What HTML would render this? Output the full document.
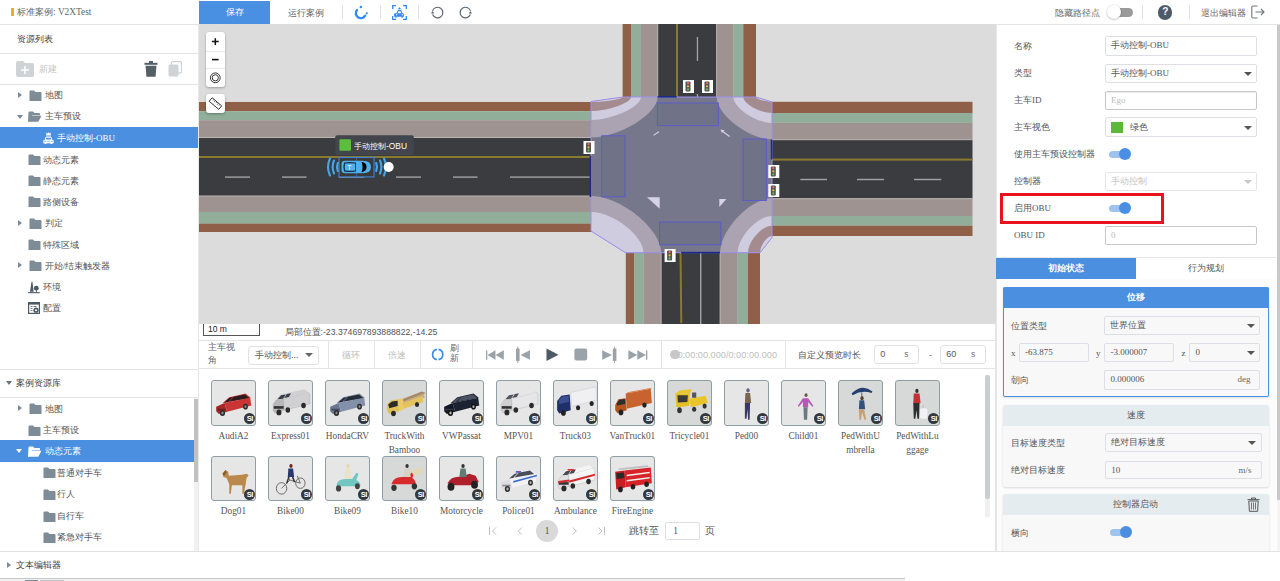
<!DOCTYPE html>
<html><head><meta charset="utf-8">
<style>
*{box-sizing:border-box;margin:0;padding:0}
html,body{width:1280px;height:581px;overflow:hidden;background:#fff}
body{position:relative;font-family:"Liberation Serif",serif;font-size:9px;color:#555}
.a{position:absolute}
.sans{font-family:"Liberation Sans",sans-serif}
.hl{position:absolute;height:1px;background:#e4e4e4}
.vl{position:absolute;width:1px;background:#e4e4e4}
/* left tree */
.ti{position:absolute;left:0;width:198px;height:21px;line-height:21px;color:#555;white-space:nowrap}
.ti .tx{position:absolute;top:0}
.fold{position:absolute;width:13px;height:10px;background:#7c8b96;border-radius:1px}
.fold:before{content:"";position:absolute;left:0;top:-2px;width:6px;height:3px;background:#7c8b96;border-radius:1px 1px 0 0}
.tri{position:absolute;width:0;height:0;border-left:4px solid #7c8b96;border-top:3.5px solid transparent;border-bottom:3.5px solid transparent}
.trid{position:absolute;width:0;height:0;border-top:4px solid #7c8b96;border-left:3.5px solid transparent;border-right:3.5px solid transparent}
/* right panel */
.lab{position:absolute;left:1014px;color:#555;line-height:12px}
.inp{position:absolute;background:#fff;border:1px solid #dcdfe6;border-radius:2px;color:#555;line-height:17px;padding-left:5px}
.caret{position:absolute;width:0;height:0;border-top:4px solid #555;border-left:4px solid transparent;border-right:4px solid transparent}
.tog{position:absolute;width:22px;height:12px}
.tog:before{content:"";position:absolute;left:0;top:2.5px;width:18px;height:7px;border-radius:4px;background:#9ec3ef}
.tog:after{content:"";position:absolute;right:0;top:0;width:12px;height:12px;border-radius:50%;background:#4a8fe2}
/* assets */
.it{position:absolute;width:57px;height:75px}
.it .bx{position:absolute;left:0;top:0;width:45px;height:45px;border:1.5px solid #8e9fa8;border-radius:3px;background:#e8e8e8;overflow:hidden}
.it .bd{position:absolute;right:1px;bottom:1px;width:10px;height:10px;border-radius:50%;background:#3a3f44;color:#fff;font:bold 6px/10px "Liberation Sans",sans-serif;text-align:center}
.it .nm{position:absolute;left:-6px;top:50px;width:57px;text-align:center;line-height:14px;color:#555;font-size:9.5px;word-break:break-all}
</style></head><body>

<!-- ===== TOP BAR ===== -->
<div class="a" style="left:0;top:0;width:1280px;height:24px;background:#fff"></div>
<div class="a" style="left:11.2px;top:7.9px;width:3px;height:8px;background:#f9a825"></div>
<div class="a" style="left:17px;top:5px;line-height:14px;color:#666;font-size:9.3px">标准案例: V2XTest</div>
<div class="a" style="left:199px;top:1px;width:71px;height:23px;background:#4a90e2;color:#fff;text-align:center;line-height:23px">保存</div>
<div class="a" style="left:287.7px;top:5.5px;line-height:14px;color:#666">运行案例</div>
<div class="a" style="left:342px;top:5px;width:1px;height:14px;background:#e0e0e0"></div>
<svg class="a" style="left:354px;top:5px" width="15" height="15" viewBox="0 0 15 15"><path d="M2.97,4.9 A5,5 0 1 0 11.13,10.61" fill="none" stroke="#2f8af5" stroke-width="2.3" stroke-linecap="round"/><circle cx="6.8" cy="2.0" r="1.2" fill="#2f8af5"/><circle cx="12.8" cy="8.3" r="1.1" fill="#2f8af5"/></svg>
<div class="a" style="left:380px;top:5px;width:1px;height:14px;background:#e0e0e0"></div>
<svg class="a" style="left:392px;top:5px" width="15" height="15" viewBox="0 0 15 15"><path d="M0.7,4 V0.7 H4 M11,0.7 H14.3 V4 M14.3,11 V14.3 H11 M4,14.3 H0.7 V11" fill="none" stroke="#2f8af5" stroke-width="1.3"/><path d="M7.5,1.8 l0.5,1.1 1.1,0.1 -0.8,0.7 0.3,1.1 -1.1,-0.6 -1.1,0.6 0.3,-1.1 -0.8,-0.7 1.1,-0.1z" fill="#2f8af5"/><path d="M4.6,8.2 l0.9,-2.6 q0.2,-0.5 0.8,-0.5 h2.4 q0.6,0 0.8,0.5 l0.9,2.6 h0.6 q0.9,0 0.9,0.9 v2.7 h-1.2 v0.9 h-1.3 v-0.9 h-4.8 v0.9 h-1.3 v-0.9 h-1.2 v-2.7 q0,-0.9 0.9,-0.9z" fill="#2f8af5"/><path d="M5.6,8.2 l0.7,-2 h2.4 l0.7,2z" fill="#fff"/><rect x="4" y="9.3" width="1.3" height="1" fill="#fff"/><rect x="9.7" y="9.3" width="1.3" height="1" fill="#fff"/></svg>
<div class="a" style="left:418px;top:5px;width:1px;height:14px;background:#e0e0e0"></div>
<svg class="a" style="left:430px;top:5px" width="15" height="15" viewBox="0 0 15 15"><path d="M2.52,5.9 A5.3,5.3 0 1 1 2.6,9.5" fill="none" stroke="#5b6770" stroke-width="1.2"/><path d="M0.9,8.6 h3.4 l-1.7,-2.6z" fill="#5b6770"/></svg>
<svg class="a" style="left:458px;top:5px" width="15" height="15" viewBox="0 0 15 15"><path d="M12.48,5.9 A5.3,5.3 0 1 0 12.4,9.5" fill="none" stroke="#5b6770" stroke-width="1.2"/><path d="M14.1,8.6 h-3.4 l1.7,-2.6z" fill="#5b6770"/></svg>
<!-- right -->
<div class="a" style="left:1054.5px;top:5.5px;line-height:14px;color:#666">隐藏路径点</div>
<div class="a" style="left:1107.5px;top:7.5px;width:25.7px;height:9.5px;border-radius:5px;background:#9a9a9a"></div>
<div class="a" style="left:1107px;top:5px;width:14px;height:14px;border-radius:50%;background:#fff;box-shadow:0 0.5px 2px rgba(0,0,0,0.35)"></div>
<div class="a" style="left:1142px;top:5px;width:1px;height:14px;background:#e0e0e0"></div>
<div class="a" style="left:1158px;top:5.2px;width:14.4px;height:14.4px;border-radius:50%;background:#4c5b66;color:#fff;text-align:center;font:bold 10px/14.4px 'Liberation Sans',sans-serif">?</div>
<div class="a" style="left:1188.5px;top:5px;width:1px;height:14px;background:#e0e0e0"></div>
<div class="a" style="left:1201.3px;top:5.5px;line-height:14px;color:#666">退出编辑器</div>
<svg class="a" style="left:1251px;top:5px" width="14" height="14" viewBox="0 0 14 14"><path d="M6.5,1 H2 q-1.2,0 -1.2,1.2 v9.6 q0,1.2 1.2,1.2 h4.5" fill="none" stroke="#6b7780" stroke-width="1.1"/><path d="M4.5,7 h8.5 M10,4 l3,3 -3,3" fill="none" stroke="#6b7780" stroke-width="1.1"/></svg>

<!-- ===== LEFT PANEL CONTENT ===== -->
<svg width="0" height="0" style="position:absolute">
<defs>
<symbol id="fd" viewBox="0 0 13 11"><path d="M0.5,1.5 q0,-1 1,-1 h3.5 l1.5,1.5 h5 q1,0 1,1 v7.5 q0,1 -1,1 h-10 q-1,0 -1,-1z" fill="currentColor"/></symbol>
<symbol id="fo" viewBox="0 0 14 11"><path d="M0.5,1.5 q0,-1 1,-1 h3.5 l1.5,1.5 h4.5 q1,0 1,1 v1.2 h-8 l-3,6.8 h-0.5 q-0.5,0 -0.5,-1z M3.5,4.8 h10 l-3.2,6 h-9.5z" fill="currentColor"/></symbol>
</defs></svg>
<div class="a" style="left:0;top:24px;width:199px;height:527px;background:#fff"></div>
<div class="hl" style="left:0;top:24px;width:199px"></div>
<div class="a" style="left:16.5px;top:32px;line-height:14px;color:#444">资源列表</div>
<div class="hl" style="left:0;top:53px;width:198px"></div>
<!-- new / trash / copy -->
<svg class="a" style="left:16px;top:61px" width="18" height="16" viewBox="0 0 18 16"><path d="M0,2 q0,-2 2,-2 h5 l2,2 h7 q2,0 2,2 v10 q0,2 -2,2 h-14 q-2,0 -2,-2z" fill="#cfd3d6"/><path d="M9,5 v8 M5,9 h8" stroke="#fff" stroke-width="1.6"/></svg>
<div class="a" style="left:38.5px;top:62px;line-height:14px;color:#c2c2c2">新建</div>
<svg class="a" style="left:144px;top:61px" width="14" height="16" viewBox="0 0 14 16"><rect x="0.5" y="1.8" width="13" height="2" fill="#555f66"/><rect x="5" y="0" width="4" height="2" fill="#555f66"/><path d="M1.6,4.8 h10.8 l-0.8,11 h-9.2z" fill="#555f66"/></svg>
<svg class="a" style="left:168px;top:61px" width="14" height="16" viewBox="0 0 14 16"><rect x="3.5" y="0.5" width="10" height="11.5" rx="1.5" fill="#fff" stroke="#cfd3d6" stroke-width="1.3"/><rect x="0.5" y="3.5" width="10" height="12" rx="1.5" fill="#cfd3d6"/></svg>
<div class="hl" style="left:0;top:84px;width:198px"></div>

<div class="tri" style="left:18px;top:91.5px"></div>
<svg class="a" style="left:28.5px;top:89.5px;color:#7d8c96" width="13" height="11"><use href="#fd"/></svg>
<div class="a" style="left:44.5px;top:88px;line-height:14px">地图</div>

<div class="trid" style="left:17px;top:114.5px"></div>
<svg class="a" style="left:27.5px;top:111px;color:#7d8c96" width="14" height="11"><use href="#fo"/></svg>
<div class="a" style="left:44.5px;top:109px;line-height:14px">主车预设</div>

<div class="a" style="left:0;top:127.2px;width:198px;height:21.1px;background:#4a8fe0"></div>
<svg class="a" style="left:42.5px;top:132px" width="11" height="12" viewBox="0 0 11 12"><path d="M3.4,3 l-0.3,-2.4 1.3,1 1.1,-1.4 1.1,1.4 1.3,-1 -0.3,2.4z" fill="#fff"/><rect x="3" y="3.5" width="5" height="1" fill="#fff"/><path d="M2.6,5 h5.8 l1,3 h0.6 q0.7,0 0.7,0.8 v2.4 h-1.4 v0.8 h-1.8 v-0.8 h-4 v0.8 h-1.8 v-0.8 h-1.4 v-2.4 q0,-0.8 0.7,-0.8 h0.6z" fill="#fff"/><path d="M3.3,5.8 h4.4 l0.6,1.6 h-5.6z" fill="#4a8fe0"/><rect x="1.5" y="8.8" width="1.2" height="1" fill="#4a8fe0"/><rect x="8.3" y="8.8" width="1.2" height="1" fill="#4a8fe0"/><rect x="3.8" y="8.8" width="3.4" height="1" fill="#4a8fe0" opacity="0.6"/></svg>
<div class="a" style="left:57px;top:131px;line-height:14px;color:#fff">手动控制-OBU</div>

<svg class="a" style="left:27.5px;top:154px;color:#7d8c96" width="13" height="11"><use href="#fd"/></svg>
<div class="a" style="left:42.5px;top:152.5px;line-height:14px">动态元素</div>
<svg class="a" style="left:27.5px;top:175.2px;color:#7d8c96" width="13" height="11"><use href="#fd"/></svg>
<div class="a" style="left:42.5px;top:173.8px;line-height:14px">静态元素</div>
<svg class="a" style="left:27.5px;top:196.4px;color:#7d8c96" width="13" height="11"><use href="#fd"/></svg>
<div class="a" style="left:42.5px;top:195px;line-height:14px">路侧设备</div>
<div class="tri" style="left:18px;top:219.8px"></div>
<svg class="a" style="left:28.8px;top:217.7px;color:#7d8c96" width="13" height="11"><use href="#fd"/></svg>
<div class="a" style="left:44.8px;top:216.3px;line-height:14px">判定</div>
<svg class="a" style="left:27.5px;top:239px;color:#7d8c96" width="13" height="11"><use href="#fd"/></svg>
<div class="a" style="left:42.5px;top:237.6px;line-height:14px">特殊区域</div>
<div class="tri" style="left:18px;top:262.3px"></div>
<svg class="a" style="left:28.8px;top:260.2px;color:#7d8c96" width="13" height="11"><use href="#fd"/></svg>
<div class="a" style="left:44.8px;top:258.8px;line-height:14px">开始/结束触发器</div>
<svg class="a" style="left:28px;top:281px" width="12" height="13" viewBox="0 0 12 13"><path d="M4,0.6 q-0.6,0 -1.2,5 l-0.8,5.2 h3.6 l-0.6,-5.2 q-0.4,-5 -1,-5z" fill="#4d5a63"/><circle cx="8.3" cy="7.2" r="2.4" fill="#4d5a63"/><rect x="7.9" y="8" width="0.9" height="3" fill="#4d5a63"/><rect x="0.1" y="11.1" width="11.7" height="1.1" fill="#4d5a63"/></svg>
<div class="a" style="left:42.5px;top:280px;line-height:14px">环境</div>
<svg class="a" style="left:28px;top:302px" width="12" height="12" viewBox="0 0 12 12"><rect x="0.6" y="0.6" width="10.8" height="10.8" fill="none" stroke="#4d5a63" stroke-width="1.2"/><rect x="0.6" y="0.6" width="10.8" height="2" fill="#4d5a63"/><path d="M2.5,4.5 h2 M2.5,6.5 h2 M2.5,8.5 h2 M5.5,4.5 h3" stroke="#4d5a63" stroke-width="0.8"/><circle cx="8" cy="8.2" r="2.6" fill="#4d5a63"/><circle cx="8" cy="8.2" r="1" fill="#fff"/></svg>
<div class="a" style="left:42.5px;top:301.3px;line-height:14px">配置</div>

<!-- lower section -->
<div class="hl" style="left:0;top:368.5px;width:199px"></div>
<div class="trid" style="left:6px;top:381px;border-top-color:#66737c"></div>
<div class="a" style="left:16.2px;top:376px;line-height:14px;color:#444">案例资源库</div>
<div class="hl" style="left:0;top:397px;width:199px"></div>
<div class="tri" style="left:18px;top:405px"></div>
<svg class="a" style="left:28.8px;top:403px;color:#7d8c96" width="13" height="11"><use href="#fd"/></svg>
<div class="a" style="left:45px;top:401.5px;line-height:14px">地图</div>
<svg class="a" style="left:27.9px;top:424.5px;color:#7d8c96" width="13" height="11"><use href="#fd"/></svg>
<div class="a" style="left:42.7px;top:423px;line-height:14px">主车预设</div>
<div class="a" style="left:0;top:440.4px;width:194px;height:21.2px;background:#4a8fe0"></div>
<div class="trid" style="left:16px;top:449px;border-top-color:#fff"></div>
<svg class="a" style="left:27.9px;top:445.5px;color:#fff" width="14" height="11"><use href="#fo"/></svg>
<div class="a" style="left:45px;top:444px;line-height:14px;color:#fff">动态元素</div>
<svg class="a" style="left:42.7px;top:467.3px;color:#7d8c96" width="13" height="11"><use href="#fd"/></svg>
<div class="a" style="left:57px;top:465.8px;line-height:14px">普通对手车</div>
<svg class="a" style="left:42.7px;top:488.9px;color:#7d8c96" width="13" height="11"><use href="#fd"/></svg>
<div class="a" style="left:57px;top:487.4px;line-height:14px">行人</div>
<svg class="a" style="left:42.7px;top:510.5px;color:#7d8c96" width="13" height="11"><use href="#fd"/></svg>
<div class="a" style="left:57px;top:509px;line-height:14px">自行车</div>
<svg class="a" style="left:42.7px;top:531.5px;color:#7d8c96" width="13" height="11"><use href="#fd"/></svg>
<div class="a" style="left:57px;top:530px;line-height:14px">紧急对手车</div>
<div class="a" style="left:194.2px;top:397.5px;width:4px;height:153.5px;background:#f1f1f1"></div>
<div class="a" style="left:194.2px;top:398.7px;width:3.6px;height:83px;background:#c1c1c1"></div>
<div class="a" style="left:198px;top:24px;width:1px;height:527px;background:#e8e8e8"></div>

<!-- ===== MAP ===== -->
<div class="a" style="left:199px;top:24px;width:797px;height:300px;background:#dcdcdc;overflow:hidden" id="map"><svg class="a" style="left:0;top:0" width="797" height="300" viewBox="199 24 797 300">
<defs>
<clipPath id="jc"><polygon points="591,101.5 623,97 756,97 772,102 772,237.5 760,252.7 625.5,252.7 591,231"/></clipPath>
<g id="tl"><rect x="-5" y="-4" width="11" height="13" fill="#fff"/><rect x="-2.5" y="-2.5" width="5" height="10" rx="1" fill="#555"/><circle cx="0" cy="-0.8" r="1.1" fill="#e66"/><circle cx="0" cy="2.3" r="1.1" fill="#eb3"/><circle cx="0" cy="5.4" r="1.1" fill="#6b5"/></g>
</defs>
<rect x="199" y="24" width="797" height="300" fill="#dcdcdc"/>
<!-- left road -->
<rect x="199" y="102" width="393" height="9.2" fill="#905f47"/>
<rect x="199" y="111.2" width="393" height="9" fill="#90ae99"/>
<rect x="199" y="120.2" width="393" height="17.3" fill="#9e9390"/>
<rect x="199" y="137.5" width="393" height="58.5" fill="#3b3c40"/>
<rect x="199" y="196" width="393" height="16" fill="#9e9390"/>
<rect x="199" y="212" width="393" height="11.6" fill="#90ae99"/>
<rect x="199" y="223.6" width="393" height="8.4" fill="#905f47"/>
<rect x="199" y="137" width="393" height="1" fill="#b9b5b4"/>
<rect x="199" y="195.5" width="393" height="1" fill="#b9b5b4"/>
<rect x="199" y="156" width="393" height="2" fill="#8a7a2e"/>
<g fill="#a3a3a3"><rect x="225" y="176.4" width="25" height="1.4"/><rect x="282" y="176.4" width="24.5" height="1.4"/><rect x="339" y="176.4" width="25" height="1.4"/><rect x="396" y="176.4" width="25" height="1.4"/><rect x="453" y="176.4" width="24.5" height="1.4"/><rect x="510" y="176.4" width="80" height="1.4"/></g>
<!-- right road -->
<rect x="771" y="101.8" width="201.5" height="11.2" fill="#905f47"/>
<rect x="771" y="113" width="201.5" height="9.9" fill="#90ae99"/>
<rect x="771" y="122.9" width="201.5" height="16.8" fill="#9e9390"/>
<rect x="771" y="139.7" width="201.5" height="59" fill="#3b3c40"/>
<rect x="771" y="198.7" width="201.5" height="17.3" fill="#9e9390"/>
<rect x="771" y="216" width="201.5" height="9.7" fill="#90ae99"/>
<rect x="771" y="225.7" width="201.5" height="10.3" fill="#905f47"/>
<rect x="771" y="139.2" width="201.5" height="1" fill="#b9b5b4"/>
<rect x="771" y="198.2" width="201.5" height="1" fill="#b9b5b4"/>
<rect x="771" y="158.6" width="201.5" height="2" fill="#8a7a2e"/>
<g fill="#a3a3a3"><rect x="800.4" y="178.8" width="26.6" height="1.4"/><rect x="857" y="178.8" width="27" height="1.4"/><rect x="914" y="178.8" width="27.3" height="1.4"/></g>
<!-- top road -->
<rect x="622.6" y="24" width="8.4" height="74" fill="#905f47"/>
<rect x="631" y="24" width="10" height="74" fill="#90ae99"/>
<rect x="641" y="24" width="16.6" height="74" fill="#9e9390"/>
<rect x="657.6" y="24" width="59.1" height="74" fill="#3b3c40"/>
<rect x="716.7" y="24" width="16.7" height="74" fill="#9e9390"/>
<rect x="733.4" y="24" width="9.9" height="74" fill="#90ae99"/>
<rect x="743.3" y="24" width="12.7" height="74" fill="#905f47"/>
<rect x="657.2" y="24" width="1" height="74" fill="#b9b5b4"/>
<rect x="716.2" y="24" width="1" height="74" fill="#b9b5b4"/>
<rect x="676" y="24" width="2" height="74" fill="#8a7a2e"/>
<rect x="696.8" y="37" width="1.3" height="24" fill="#a3a3a3"/><rect x="696.8" y="94" width="1.3" height="3.5" fill="#a3a3a3"/>
<!-- bottom road -->
<rect x="625.8" y="252" width="8.6" height="72" fill="#905f47"/>
<rect x="634.4" y="252" width="9" height="72" fill="#90ae99"/>
<rect x="643.4" y="252" width="17.7" height="72" fill="#9e9390"/>
<rect x="661.1" y="252" width="59" height="72" fill="#3b3c40"/>
<rect x="720.1" y="252" width="17.6" height="72" fill="#9e9390"/>
<rect x="737.7" y="252" width="10.3" height="72" fill="#90ae99"/>
<rect x="748" y="252" width="12" height="72" fill="#905f47"/>
<rect x="660.6" y="252" width="1" height="72" fill="#b9b5b4"/>
<rect x="719.6" y="252" width="1" height="72" fill="#b9b5b4"/>
<polygon points="679.5,252 681.5,252 682.3,323 680.3,323" fill="#8a7a2e"/>
<rect x="700" y="252" width="1.4" height="72" fill="#a3a3a3"/>
<!-- junction -->
<g clip-path="url(#jc)">
<rect x="585" y="90" width="195" height="170" fill="#76778a"/>
<path d="M591,97 L657.6,97.0 C657.6,114.0 619.0,137.5 591.0,137.5 Z" fill="#aba3b2"/>
<path d="M591,97 L641.0,97.0 C641.0,106.7 612.0,120.0 591.0,120.0 Z" fill="#cfccdf"/>
<path d="M591,97 L631.0,97.0 C631.0,102.9 607.8,111.0 591.0,111.0 Z" fill="#a48b8f"/>
<path d="M591,97 L622.6,97.0 C622.6,99.1 604.3,102.0 591.0,102.0 Z" fill="#d1cfe0"/>
<path d="M772,97 L716.7,97.0 C716.7,114.8 748.8,139.4 772.0,139.4 Z" fill="#aba3b2"/>
<path d="M772,97 L733.4,97.0 C733.4,107.9 755.8,122.9 772.0,122.9 Z" fill="#cfccdf"/>
<path d="M772,97 L743.3,97.0 C743.3,103.7 759.9,113.0 772.0,113.0 Z" fill="#a48b8f"/>
<path d="M772,97 L756.0,97.0 C756.0,99.0 765.3,101.8 772.0,101.8 Z" fill="#d1cfe0"/>
<path d="M591,252.7 L661.1,252.7 C661.1,228.9 620.4,196.0 591.0,196.0 Z" fill="#aba3b2"/>
<path d="M591,252.7 L643.4,252.7 C643.4,235.6 613.0,212.0 591.0,212.0 Z" fill="#cfccdf"/>
<path d="M772,252.7 L720.1,252.7 C720.1,229.8 750.2,198.2 772.0,198.2 Z" fill="#aba3b2"/>
<path d="M772,252.7 L737.7,252.7 C737.7,237.3 757.6,216.0 772.0,216.0 Z" fill="#cfccdf"/>
<path d="M772,252.7 L748.0,252.7 C748.0,241.4 761.9,225.7 772.0,225.7 Z" fill="#a48b8f"/>
<path d="M772,252.7 L760.0,252.7 C760.0,245.7 767.0,236.0 772.0,236.0 Z" fill="#d1cfe0"/>
<g fill="#707288" stroke="#5a5ad0" stroke-width="0.9">
<rect x="657.4" y="103" width="61" height="22.6"/>
<rect x="601.7" y="135.8" width="23.3" height="61"/>
<rect x="743" y="139" width="23.4" height="61.5"/>
<rect x="659.6" y="222" width="61.3" height="22.8"/>
</g>
<g fill="#d4d4e6"><polygon points="647,197.2 659.7,197.2 659.7,208.7"/><polygon points="719.3,199 726.4,199 719.3,207"/></g><g stroke="#d4d4e6" stroke-width="1.1"><line x1="653.6" y1="135.4" x2="658.8" y2="131.8"/><line x1="721.5" y1="130.5" x2="729.6" y2="136.5"/></g><polygon points="720.5,129.5 724.5,130.2 722,133" fill="#d4d4e6"/>
</g>
<polygon points="591,101.5 623,97 756,97 772,102 772,237.5 760,252.7 625.5,252.7 591,231" fill="none" stroke="#9d90f0" stroke-width="1"/>
<rect x="589.6" y="156" width="1.6" height="41" fill="#1c2a8a"/>
<rect x="770.8" y="139.5" width="1.6" height="20" fill="#1c2a8a"/>
<rect x="657.6" y="96" width="19" height="1.6" fill="#1c2a8a"/>
<rect x="681" y="251.8" width="39" height="1.6" fill="#1c2a8a"/>
<!-- traffic lights -->
<use href="#tl" x="688" y="84"/><use href="#tl" x="707" y="84"/>
<use href="#tl" x="588.5" y="145"/>
<use href="#tl" x="773.3" y="169"/><use href="#tl" x="773.3" y="188"/>
<use href="#tl" x="669.6" y="253"/>
<!-- car label -->
<rect x="335.2" y="135.2" width="78.6" height="19.9" rx="2" fill="#42454b"/>
<rect x="339.4" y="139.2" width="11.6" height="11.6" rx="1" fill="#5cbf3c"/>
<text x="354" y="148.6" font-family="Liberation Sans, sans-serif" font-size="8.4" fill="#fff">手动控制-OBU</text>
<!-- car -->
<rect x="339" y="157.5" width="35" height="19.4" fill="#3b3838" stroke="#3f7fd0" stroke-width="1.2"/>
<rect x="356" y="157.5" width="0.6" height="19.4" fill="#3f7fd0"/>
<path d="M345,160.8 h18 q8,0 8,6.2 q0,6.2 -8,6.2 h-18 q-3.5,0 -3.5,-3 v-6.4 q0,-3 3.5,-3z" fill="#4fb0ea"/>
<path d="M361.5,161.8 q5,1 5,5.2 q0,4.2 -5,5.2 q2.2,-5.2 0,-10.4z" fill="#000"/>
<path d="M344,162.6 q6,-1 12,0 v8.8 q-6,1 -12,0 q-1.2,-4.4 0,-8.8z" fill="#14304a"/>
<path d="M345.2,163.6 q5,-0.8 10,0 v6.8 q-5,0.8 -10,0 q-1,-3.4 0,-6.8z" fill="#4fb0ea"/>
<text x="347.5" y="170.2" font-family="Liberation Sans, sans-serif" font-size="6.5" fill="#fff">T</text>
<g fill="none" stroke="#44a8e8" stroke-width="2.1" stroke-linecap="round">
<path d="M337.8,163 q-1.6,4 0,8"/><path d="M334,160.5 q-2.8,6.5 0,13"/><path d="M330,158.5 q-4,8.5 0,17"/>
<path d="M376.2,163 q1.6,4 0,8"/><path d="M380,160.5 q2.8,6.5 0,13"/><path d="M384,158.5 q4,8.5 0,17"/>
</g>
<circle cx="388.7" cy="167" r="5" fill="#fff"/>
</svg>
</div>


<div class="a" style="left:206.3px;top:32px;width:18.6px;height:55px;background:#fff;border-radius:3px;box-shadow:0 1px 2.5px rgba(0,0,0,0.3)"></div>
<div class="a" style="left:206.3px;top:50.5px;width:18.6px;height:1px;background:#e8e8e8"></div>
<div class="a" style="left:206.3px;top:68.4px;width:18.6px;height:1px;background:#e8e8e8"></div>
<svg class="a" style="left:206.3px;top:32px" width="19" height="55" viewBox="0 0 19 55"><path d="M9.3,6.2 v6.8 M5.9,9.6 h6.8" stroke="#111" stroke-width="1.5"/><path d="M6,27.6 h6.6" stroke="#111" stroke-width="1.6"/><circle cx="9.3" cy="45.8" r="4.9" fill="none" stroke="#222" stroke-width="0.9"/><circle cx="9.3" cy="45.8" r="3.1" fill="none" stroke="#222" stroke-width="0.9"/></svg>
<div class="a" style="left:206.3px;top:94.4px;width:18.6px;height:18.7px;background:#fff;border-radius:3px;box-shadow:0 1px 2.5px rgba(0,0,0,0.3)"></div>
<svg class="a" style="left:206.3px;top:94.4px" width="19" height="19" viewBox="0 0 19 19"><g transform="rotate(40 9.5 9.5)"><rect x="3.2" y="7.3" width="12.6" height="4.6" fill="none" stroke="#333" stroke-width="0.9"/><path d="M5.5,7.3 v1.6 M7.5,7.3 v2.2 M9.5,7.3 v1.6 M11.5,7.3 v2.2 M13.5,7.3 v1.6" stroke="#333" stroke-width="0.6"/></g></svg>
<!-- ===== SCALE / CONTROL BAR ===== -->
<div class="a" style="left:199px;top:324px;width:797px;height:227px;background:#fff"></div>
<div class="a" style="left:203px;top:324px;width:56.5px;height:12px;border:1.5px solid #555;border-top:none"></div>
<div class="a sans" style="left:208px;top:324px;line-height:11px;font-size:8.5px;color:#222">10 m</div>
<div class="a sans" style="left:284.5px;top:325.5px;line-height:13px;font-size:8.7px;color:#555">局部位置:-23.374697893888822,-14.25</div>
<div class="hl" style="left:199px;top:340px;width:797px"></div>
<div class="hl" style="left:199px;top:368px;width:797px"></div>
<div class="a sans" style="left:208px;top:341px;width:36px;line-height:13.3px;font-size:9px;color:#666">主车视<br>角</div>
<div class="a sans" style="left:248px;top:345.5px;width:70.8px;height:19.2px;border:1px solid #e2e2e2;border-radius:3px;line-height:17px;padding-left:6px;color:#555;font-size:9px">手动控制...</div>
<div class="caret" style="left:305px;top:353.3px;border-top-color:#666"></div>
<div class="vl" style="left:327.5px;top:341px;height:27px"></div>
<div class="a sans" style="left:341.5px;top:347.5px;line-height:14px;color:#bbb;font-size:9px">循环</div>
<div class="vl" style="left:374.4px;top:341px;height:27px"></div>
<div class="a sans" style="left:387.5px;top:347.5px;line-height:14px;color:#bbb;font-size:9px">倍速</div>
<div class="vl" style="left:420.3px;top:341px;height:27px"></div>
<svg class="a" style="left:431px;top:348px" width="13" height="13" viewBox="0 0 13 13"><path d="M5.9,1.3 A5.3,5.3 0 0 0 5.9,11.7" fill="none" stroke="#3c8ee8" stroke-width="1.7"/><path d="M7.5,1.3 A5.3,5.3 0 0 1 7.5,11.7" fill="none" stroke="#3c8ee8" stroke-width="1.7"/></svg>
<div class="a sans" style="left:450px;top:342.5px;width:12px;line-height:10.5px;color:#666;font-size:9px">刷<br>新</div>
<div class="vl" style="left:472.4px;top:341px;height:27px"></div>
<svg class="a" style="left:485px;top:346px" width="165" height="18" viewBox="485 346 165 18">
<g fill="#9aa3aa">
<rect x="486" y="350.3" width="1.3" height="9.4"/><polygon points="487.5,355 495.5,350.3 495.5,359.7"/><polygon points="495.5,355 503.8,350.3 503.8,359.7"/>
<rect x="516" y="348.6" width="3.6" height="12.3"/><rect x="517.3" y="346.6" width="1" height="16.3"/><polygon points="520.5,355 530,350.3 530,359.7"/>
<rect x="574.4" y="348.4" width="12.8" height="12.2" rx="2"/>
<polygon points="612,355 602.2,350.3 602.2,359.7"/><rect x="612.8" y="348.6" width="3.6" height="12.3"/><rect x="614.1" y="346.6" width="1" height="16.3"/>
<polygon points="637.3,355 628.4,350.3 628.4,359.7"/><polygon points="646,355 637.3,350.3 637.3,359.7"/><rect x="646" y="350.3" width="1.3" height="9.4"/>
</g>
<polygon points="546.5,348.4 558.5,354.7 546.5,361" fill="#4d5a63"/>
</svg>
<div class="vl" style="left:660.5px;top:341px;height:27px"></div>
<div class="a" style="left:670px;top:349.5px;width:9.5px;height:9.5px;border-radius:50%;background:#c8c8c8"></div>
<div class="a sans" style="left:676px;top:347.5px;line-height:14px;color:#c0c0c0;font-size:9.2px;width:101px;overflow:hidden;white-space:nowrap;direction:rtl">0:00:00.000/0:00:00.000</div>
<div class="vl" style="left:785.4px;top:341px;height:27px"></div>
<div class="a sans" style="left:797.5px;top:347.5px;line-height:14px;color:#555;font-size:9px">自定义预览时长</div>
<div class="a sans" style="left:874.3px;top:344.6px;width:45.2px;height:19.1px;border:1px solid #e2e2e2;border-radius:3px;line-height:17px;padding-left:5px;color:#555;font-size:9px">0<span style="position:absolute;right:10px;color:#777;font-size:8.5px">s</span></div>
<div class="a sans" style="left:929px;top:347.5px;line-height:14px;color:#666;font-size:9px">-</div>
<div class="a sans" style="left:940.2px;top:344.6px;width:46px;height:19.1px;border:1px solid #e2e2e2;border-radius:3px;line-height:17px;padding-left:5px;color:#555;font-size:9px">60<span style="position:absolute;right:10px;color:#777;font-size:8.5px">s</span></div>
<div class="vl" style="left:995px;top:323px;height:228px"></div>

<!-- ===== ASSETS ===== -->
<div class="a" style="left:210.7px;top:380.2px;width:45.5px;height:45.5px;border:1.6px solid #8d9ea7;border-radius:3px;background:#e6e6e6;overflow:hidden"><svg width="45" height="45" viewBox="1 1 43 43" style="position:absolute;left:0;top:0"><polygon points="5,25.5 13,22 15.5,30.5 7.5,32.5 5,30" fill="#a82626"/>
<polygon points="13,22 37.5,17 38.5,24.5 15.5,30.5" fill="#c93434"/>
<polygon points="11,22.3 17.5,16.5 33,13 38,17 13,22" fill="#c93434"/>
<polygon points="12.5,21.6 17.8,17 21,16.3 16.5,21" fill="#2a1c1c"/>
<polygon points="17.8,20.6 21.8,16 32.5,13.8 36.5,17.2" fill="#2a1c1c"/>
<rect x="6" y="27.5" width="8" height="1.6" fill="#2a1c1c" opacity="0.55"/>
<ellipse cx="11" cy="31.5" rx="2.5" ry="2.9" fill="#2a2a2a"/><ellipse cx="11" cy="31.5" rx="1.1" ry="1.4" fill="#888"/>
<ellipse cx="33" cy="25.5" rx="2.3" ry="2.7" fill="#2a2a2a"/><ellipse cx="33" cy="25.5" rx="1" ry="1.3" fill="#888"/></svg></div>
<div class="a" style="left:244.3px;top:413.2px;width:11px;height:11px;border-radius:50%;background:#32383d;color:#fff;text-align:center;font:bold 7.5px/11px 'Liberation Sans',sans-serif;letter-spacing:-0.5px">SI</div>
<div class="a" style="left:202.7px;top:428.7px;width:61.5px;text-align:center;line-height:14px;color:#555;font-size:9.3px">AudiA2</div>
<div class="a" style="left:267.7px;top:380.2px;width:45.5px;height:45.5px;border:1.6px solid #8d9ea7;border-radius:3px;background:#e6e6e6;overflow:hidden"><svg width="45" height="45" viewBox="1 1 43 43" style="position:absolute;left:0;top:0"><polygon points="5,23 8,19 15,18 15.5,29 6.5,31.5 5,29.5" fill="#b8b8ba" stroke="#a8a8ac" stroke-width="0.35"/>
<polygon points="15,18 38,11.5 40,13 40,23 15.5,29" fill="#d0d0d2" stroke="#a8a8ac" stroke-width="0.35"/>
<polygon points="8,19 12,14 35,9 38,11.5 15,18" fill="#d0d0d2"/>
<polygon points="9,18.5 12.5,14.5 17,13.8 14.5,18" fill="#3a3e46"/>
<polygon points="15.5,17.2 18,13.5 22,12.7 20,16.3" fill="#3a3e46"/>
<rect x="5.5" y="25" width="9.5" height="2.5" fill="#333"/>
<ellipse cx="10.5" cy="31" rx="2.4" ry="2.8" fill="#2a2a2a"/><ellipse cx="34" cy="24.5" rx="2.2" ry="2.6" fill="#2a2a2a"/><ellipse cx="19" cy="28.8" rx="2.2" ry="2.6" fill="#2a2a2a"/></svg></div>
<div class="a" style="left:301.3px;top:413.2px;width:11px;height:11px;border-radius:50%;background:#32383d;color:#fff;text-align:center;font:bold 7.5px/11px 'Liberation Sans',sans-serif;letter-spacing:-0.5px">SI</div>
<div class="a" style="left:259.7px;top:428.7px;width:61.5px;text-align:center;line-height:14px;color:#555;font-size:9.3px">Express01</div>
<div class="a" style="left:324.7px;top:380.2px;width:45.5px;height:45.5px;border:1.6px solid #8d9ea7;border-radius:3px;background:#e6e6e6;overflow:hidden"><svg width="45" height="45" viewBox="1 1 43 43" style="position:absolute;left:0;top:0"><polygon points="5,25.5 13,22 15.5,30.5 7.5,32.5 5,30" fill="#6b7690"/>
<polygon points="13,22 37.5,17 38.5,24.5 15.5,30.5" fill="#8390aa"/>
<polygon points="11,22.3 17.5,16.5 33,13 38,17 13,22" fill="#8390aa"/>
<polygon points="12.5,21.6 17.8,17 21,16.3 16.5,21" fill="#262c38"/>
<polygon points="17.8,20.6 21.8,16 32.5,13.8 36.5,17.2" fill="#262c38"/>
<rect x="6" y="27.5" width="8" height="1.6" fill="#262c38" opacity="0.55"/>
<ellipse cx="11" cy="31.5" rx="2.5" ry="2.9" fill="#2a2a2a"/><ellipse cx="11" cy="31.5" rx="1.1" ry="1.4" fill="#888"/>
<ellipse cx="33" cy="25.5" rx="2.3" ry="2.7" fill="#2a2a2a"/><ellipse cx="33" cy="25.5" rx="1" ry="1.3" fill="#888"/></svg></div>
<div class="a" style="left:358.3px;top:413.2px;width:11px;height:11px;border-radius:50%;background:#32383d;color:#fff;text-align:center;font:bold 7.5px/11px 'Liberation Sans',sans-serif;letter-spacing:-0.5px">SI</div>
<div class="a" style="left:316.7px;top:428.7px;width:61.5px;text-align:center;line-height:14px;color:#555;font-size:9.3px">HondaCRV</div>
<div class="a" style="left:381.7px;top:380.2px;width:45.5px;height:45.5px;border:1.6px solid #8d9ea7;border-radius:3px;background:#d7d9d9;overflow:hidden"><svg width="45" height="45" viewBox="1 1 43 43" style="position:absolute;left:0;top:0"><polygon points="18,19 38,11 42,12.5 22,21" fill="#a58a66"/><polygon points="19,21 40,13 41,17 20,25" fill="#c9ad82"/>
<polygon points="5,23 9,19.5 16,18.5 16.5,30 7,32.5 5,30" fill="#e2c05a"/><polygon points="6,23.5 9.5,20.5 15,19.8 15,25 7,27" fill="#2a2a2a"/>
<polygon points="16,18.5 20,17.5 21,28 16.5,30" fill="#eccb66"/><polygon points="20,22 39,15.5 39.5,21 21,27.5" fill="#e5c35c"/>
<ellipse cx="11" cy="32" rx="2.3" ry="2.6" fill="#2a2a2a"/><ellipse cx="33.5" cy="23.5" rx="2" ry="2.4" fill="#2a2a2a"/></svg></div>
<div class="a" style="left:415.3px;top:413.2px;width:11px;height:11px;border-radius:50%;background:#32383d;color:#fff;text-align:center;font:bold 7.5px/11px 'Liberation Sans',sans-serif;letter-spacing:-0.5px">SI</div>
<div class="a" style="left:373.7px;top:428.7px;width:61.5px;text-align:center;line-height:14px;color:#555;font-size:9.3px">TruckWith<br>Bamboo</div>
<div class="a" style="left:438.7px;top:380.2px;width:45.5px;height:45.5px;border:1.6px solid #8d9ea7;border-radius:3px;background:#e6e6e6;overflow:hidden"><svg width="45" height="45" viewBox="1 1 43 43" style="position:absolute;left:0;top:0"><polygon points="5,25.5 13,22 15.5,30.5 7.5,32.5 5,30" fill="#141826"/>
<polygon points="13,22 37.5,17 38.5,24.5 15.5,30.5" fill="#1c2232"/>
<polygon points="11,22.3 17.5,16.5 33,13 38,17 13,22" fill="#1c2232"/>
<polygon points="12.5,21.6 17.8,17 21,16.3 16.5,21" fill="#4c5262"/>
<polygon points="17.8,20.6 21.8,16 32.5,13.8 36.5,17.2" fill="#4c5262"/>
<rect x="6" y="27.5" width="8" height="1.6" fill="#4c5262" opacity="0.55"/>
<ellipse cx="11" cy="31.5" rx="2.5" ry="2.9" fill="#111"/><ellipse cx="11" cy="31.5" rx="1.1" ry="1.4" fill="#bbb"/>
<ellipse cx="33" cy="25.5" rx="2.3" ry="2.7" fill="#111"/><ellipse cx="33" cy="25.5" rx="1" ry="1.3" fill="#bbb"/></svg></div>
<div class="a" style="left:472.3px;top:413.2px;width:11px;height:11px;border-radius:50%;background:#32383d;color:#fff;text-align:center;font:bold 7.5px/11px 'Liberation Sans',sans-serif;letter-spacing:-0.5px">SI</div>
<div class="a" style="left:430.7px;top:428.7px;width:61.5px;text-align:center;line-height:14px;color:#555;font-size:9.3px">VWPassat</div>
<div class="a" style="left:495.7px;top:380.2px;width:45.5px;height:45.5px;border:1.6px solid #8d9ea7;border-radius:3px;background:#e6e6e6;overflow:hidden"><svg width="45" height="45" viewBox="1 1 43 43" style="position:absolute;left:0;top:0"><polygon points="5,23 8,19 15,18 15.5,29 6.5,31.5 5,29.5" fill="#cfcfd2" stroke="#a8a8ac" stroke-width="0.35"/>
<polygon points="15,18 38,11.5 40,13 40,23 15.5,29" fill="#e6e6e8" stroke="#a8a8ac" stroke-width="0.35"/>
<polygon points="8,19 12,14 35,9 38,11.5 15,18" fill="#e6e6e8"/>
<polygon points="9,18.5 12.5,14.5 17,13.8 14.5,18" fill="#50545c"/>
<polygon points="15.5,17.2 18,13.5 22,12.7 20,16.3" fill="#50545c"/>
<rect x="5.5" y="25" width="9.5" height="2.5" fill="#333"/>
<ellipse cx="10.5" cy="31" rx="2.4" ry="2.8" fill="#2a2a2a"/><ellipse cx="34" cy="24.5" rx="2.2" ry="2.6" fill="#2a2a2a"/><ellipse cx="19" cy="28.8" rx="2.2" ry="2.6" fill="#2a2a2a"/></svg></div>
<div class="a" style="left:529.3px;top:413.2px;width:11px;height:11px;border-radius:50%;background:#32383d;color:#fff;text-align:center;font:bold 7.5px/11px 'Liberation Sans',sans-serif;letter-spacing:-0.5px">SI</div>
<div class="a" style="left:487.7px;top:428.7px;width:61.5px;text-align:center;line-height:14px;color:#555;font-size:9.3px">MPV01</div>
<div class="a" style="left:552.7px;top:380.2px;width:45.5px;height:45.5px;border:1.6px solid #8d9ea7;border-radius:3px;background:#e6e6e6;overflow:hidden"><svg width="45" height="45" viewBox="1 1 43 43" style="position:absolute;left:0;top:0"><polygon points="17,12 41,6.5 42,19 18,25.5" fill="#f0f0f2" stroke="#c4c4c8" stroke-width="0.4"/>
<polygon points="4,20 8,15 16,14 17,29 6,32 4,29" fill="#1f2f6a"/><polygon points="5.5,19.5 8.5,16 15,15.2 15.5,21 6,23" fill="#3b4f8e"/>
<ellipse cx="10" cy="31.5" rx="2.3" ry="2.7" fill="#222"/><ellipse cx="24" cy="26.5" rx="2" ry="2.4" fill="#222"/><ellipse cx="37" cy="22.5" rx="2" ry="2.4" fill="#222"/></svg></div>
<div class="a" style="left:586.3px;top:413.2px;width:11px;height:11px;border-radius:50%;background:#32383d;color:#fff;text-align:center;font:bold 7.5px/11px 'Liberation Sans',sans-serif;letter-spacing:-0.5px">SI</div>
<div class="a" style="left:544.7px;top:428.7px;width:61.5px;text-align:center;line-height:14px;color:#555;font-size:9.3px">Truck03</div>
<div class="a" style="left:609.7px;top:380.2px;width:45.5px;height:45.5px;border:1.6px solid #8d9ea7;border-radius:3px;background:#e6e6e6;overflow:hidden"><svg width="45" height="45" viewBox="1 1 43 43" style="position:absolute;left:0;top:0"><polygon points="15,13 39,8.5 40,22 16,27.5" fill="#c8622e"/><polygon points="15,13 18,11.5 40,7.5 39,8.5" fill="#d87a48"/>
<polygon points="5,24 8,18.5 15,17.5 16,29 7,31.5 5,29" fill="#b5541f"/><polygon points="6.5,22.5 9,19 14.5,18.3 14.5,23 7,24.5" fill="#2e2e2e"/>
<ellipse cx="10.5" cy="31" rx="2.3" ry="2.7" fill="#222"/><ellipse cx="33" cy="24" rx="2.1" ry="2.5" fill="#222"/></svg></div>
<div class="a" style="left:643.3px;top:413.2px;width:11px;height:11px;border-radius:50%;background:#32383d;color:#fff;text-align:center;font:bold 7.5px/11px 'Liberation Sans',sans-serif;letter-spacing:-0.5px">SI</div>
<div class="a" style="left:601.7px;top:428.7px;width:61.5px;text-align:center;line-height:14px;color:#555;font-size:9.3px">VanTruck01</div>
<div class="a" style="left:666.7px;top:380.2px;width:45.5px;height:45.5px;border:1.6px solid #8d9ea7;border-radius:3px;background:#d7d9d9;overflow:hidden"><svg width="45" height="45" viewBox="1 1 43 43" style="position:absolute;left:0;top:0"><polygon points="8,13 12,10 24,9 22,13" fill="#e8c62a"/><polygon points="8,13 22,13 21,25 9,26" fill="#e6c020"/><polygon points="10,14.5 20,14.5 19.5,21 10.5,21.5" fill="#3a3a3a"/>
<polygon points="21,18 37,15 39,22 23,26" fill="#e8c62a"/><rect x="24" y="12" width="4" height="5" fill="#555"/>
<ellipse cx="12" cy="29" rx="2.2" ry="2.8" fill="#333"/><ellipse cx="26" cy="28" rx="2" ry="2.5" fill="#333"/><ellipse cx="36" cy="25" rx="2" ry="2.5" fill="#333"/></svg></div>
<div class="a" style="left:700.3px;top:413.2px;width:11px;height:11px;border-radius:50%;background:#32383d;color:#fff;text-align:center;font:bold 7.5px/11px 'Liberation Sans',sans-serif;letter-spacing:-0.5px">SI</div>
<div class="a" style="left:658.7px;top:428.7px;width:61.5px;text-align:center;line-height:14px;color:#555;font-size:9.3px">Tricycle01</div>
<div class="a" style="left:723.7px;top:380.2px;width:45.5px;height:45.5px;border:1.6px solid #8d9ea7;border-radius:3px;background:#e6e6e6;overflow:hidden"><svg width="45" height="45" viewBox="1 1 43 43" style="position:absolute;left:0;top:0"><ellipse cx="23" cy="10" rx="1.6" ry="2" fill="#6a5a90"/><polygon points="20.5,12.5 25,12.5 26,22 20,22" fill="#7a6450"/><polygon points="20,22 25,22 24.5,38 23,38 22.5,28 21.5,37 20,37" fill="#3a3562"/></svg></div>
<div class="a" style="left:757.3px;top:413.2px;width:11px;height:11px;border-radius:50%;background:#32383d;color:#fff;text-align:center;font:bold 7.5px/11px 'Liberation Sans',sans-serif;letter-spacing:-0.5px">SI</div>
<div class="a" style="left:715.7px;top:428.7px;width:61.5px;text-align:center;line-height:14px;color:#555;font-size:9.3px">Ped00</div>
<div class="a" style="left:780.7px;top:380.2px;width:45.5px;height:45.5px;border:1.6px solid #8d9ea7;border-radius:3px;background:#e6e6e6;overflow:hidden"><svg width="45" height="45" viewBox="1 1 43 43" style="position:absolute;left:0;top:0"><ellipse cx="24" cy="14.5" rx="1.4" ry="1.7" fill="#6a5040"/><polygon points="16,25 21,17.5 26,17.5 31,25 30,25.5 26,21 26,26 21,26 21,21 17,25.5" fill="#b658b6"/><polygon points="21.5,26 25.5,26 25,38 22,38" fill="#6a7a82"/></svg></div>
<div class="a" style="left:814.3px;top:413.2px;width:11px;height:11px;border-radius:50%;background:#32383d;color:#fff;text-align:center;font:bold 7.5px/11px 'Liberation Sans',sans-serif;letter-spacing:-0.5px">SI</div>
<div class="a" style="left:772.7px;top:428.7px;width:61.5px;text-align:center;line-height:14px;color:#555;font-size:9.3px">Child01</div>
<div class="a" style="left:837.7px;top:380.2px;width:45.5px;height:45.5px;border:1.6px solid #8d9ea7;border-radius:3px;background:#d7d9d9;overflow:hidden"><svg width="45" height="45" viewBox="1 1 43 43" style="position:absolute;left:0;top:0"><path d="M13,13 q10,-10 20,-2 l-1,1.5 q-9,-3 -18,2z" fill="#243f70"/><rect x="22.5" y="12" width="0.7" height="6" fill="#333"/><ellipse cx="23" cy="17.5" rx="1.6" ry="1.9" fill="#5a4030"/><polygon points="20.5,19.5 25,19.5 26,28 20,28" fill="#33507e"/><polygon points="20,28 25,28 27,38 25.5,38 23,31 22,38 20.5,38" fill="#c6a070"/></svg></div>
<div class="a" style="left:871.3px;top:413.2px;width:11px;height:11px;border-radius:50%;background:#32383d;color:#fff;text-align:center;font:bold 7.5px/11px 'Liberation Sans',sans-serif;letter-spacing:-0.5px">SI</div>
<div class="a" style="left:829.7px;top:428.7px;width:61.5px;text-align:center;line-height:14px;color:#555;font-size:9.3px">PedWithU<br>mbrella</div>
<div class="a" style="left:894.7px;top:380.2px;width:45.5px;height:45.5px;border:1.6px solid #8d9ea7;border-radius:3px;background:#d7d9d9;overflow:hidden"><svg width="45" height="45" viewBox="1 1 43 43" style="position:absolute;left:0;top:0"><ellipse cx="21" cy="10.5" rx="1.6" ry="2" fill="#333"/><polygon points="18,13 23.5,13 24.5,22 17.5,22" fill="#c43036"/><polygon points="17.5,22 23.5,22 23,37 21.5,37 20.5,29 19.5,37 18,37" fill="#2e2e2e"/><rect x="24" y="27" width="7" height="10" rx="2" fill="#f2f2f4"/><rect x="26.5" y="24" width="0.8" height="3" fill="#bbb"/></svg></div>
<div class="a" style="left:928.3px;top:413.2px;width:11px;height:11px;border-radius:50%;background:#32383d;color:#fff;text-align:center;font:bold 7.5px/11px 'Liberation Sans',sans-serif;letter-spacing:-0.5px">SI</div>
<div class="a" style="left:886.7px;top:428.7px;width:61.5px;text-align:center;line-height:14px;color:#555;font-size:9.3px">PedWithLu<br>ggage</div>
<div class="a" style="left:210.7px;top:455.9px;width:45.5px;height:45.5px;border:1.6px solid #8d9ea7;border-radius:3px;background:#e6e6e6;overflow:hidden"><svg width="45" height="45" viewBox="1 1 43 43" style="position:absolute;left:0;top:0"><polygon points="11,17 14,13.5 16.5,15 17,19 30,18 34,17 36,18.5 34,21 33,28 31.5,36 30,36 30,28 20,28 19,36 17.5,36 17.5,27 15,21 12,20" fill="#b9884a"/><polygon points="11,17 14,13.5 15,16 12.5,19" fill="#8a5e2a"/></svg></div>
<div class="a" style="left:244.3px;top:488.9px;width:11px;height:11px;border-radius:50%;background:#32383d;color:#fff;text-align:center;font:bold 7.5px/11px 'Liberation Sans',sans-serif;letter-spacing:-0.5px">SI</div>
<div class="a" style="left:202.7px;top:504.4px;width:61.5px;text-align:center;line-height:14px;color:#555;font-size:9.3px">Dog01</div>
<div class="a" style="left:267.7px;top:455.9px;width:45.5px;height:45.5px;border:1.6px solid #8d9ea7;border-radius:3px;background:#e6e6e6;overflow:hidden"><svg width="45" height="45" viewBox="1 1 43 43" style="position:absolute;left:0;top:0"><ellipse cx="13" cy="31" rx="5" ry="5.5" fill="none" stroke="#555" stroke-width="0.8"/><ellipse cx="31" cy="26" rx="4.5" ry="5" fill="none" stroke="#555" stroke-width="0.8"/><path d="M13,31 l8,-8 l10,3 M21,23 l-2,-3 M28,19 l3,7" fill="none" stroke="#666" stroke-width="0.9"/><ellipse cx="22" cy="9.5" rx="1.5" ry="1.8" fill="#6a1a1a"/><polygon points="19.5,12 24,12 25,20 19,20" fill="#2a3a6e"/><path d="M20,20 l-2,6 M23.5,20 l2,5" stroke="#333" stroke-width="1.4"/></svg></div>
<div class="a" style="left:301.3px;top:488.9px;width:11px;height:11px;border-radius:50%;background:#32383d;color:#fff;text-align:center;font:bold 7.5px/11px 'Liberation Sans',sans-serif;letter-spacing:-0.5px">SI</div>
<div class="a" style="left:259.7px;top:504.4px;width:61.5px;text-align:center;line-height:14px;color:#555;font-size:9.3px">Bike00</div>
<div class="a" style="left:324.7px;top:455.9px;width:45.5px;height:45.5px;border:1.6px solid #8d9ea7;border-radius:3px;background:#e6e6e6;overflow:hidden"><svg width="45" height="45" viewBox="1 1 43 43" style="position:absolute;left:0;top:0"><path d="M11,29 q0,-7 9,-7 h6 l4,-6 2,1 -2,6 q4,2 4,6z" fill="#72c6c2"/><ellipse cx="13" cy="31" rx="2.5" ry="3" fill="#444"/><ellipse cx="31" cy="29" rx="2.3" ry="2.8" fill="#444"/><ellipse cx="22" cy="9.5" rx="1.6" ry="1.9" fill="#e6d6b0"/><polygon points="19.5,12 24.5,12 25.5,22 18.5,22" fill="#e8e2cc"/></svg></div>
<div class="a" style="left:358.3px;top:488.9px;width:11px;height:11px;border-radius:50%;background:#32383d;color:#fff;text-align:center;font:bold 7.5px/11px 'Liberation Sans',sans-serif;letter-spacing:-0.5px">SI</div>
<div class="a" style="left:316.7px;top:504.4px;width:61.5px;text-align:center;line-height:14px;color:#555;font-size:9.3px">Bike09</div>
<div class="a" style="left:381.7px;top:455.9px;width:45.5px;height:45.5px;border:1.6px solid #8d9ea7;border-radius:3px;background:#d7d9d9;overflow:hidden"><svg width="45" height="45" viewBox="1 1 43 43" style="position:absolute;left:0;top:0"><path d="M9,27 q2,-7 10,-7 h6 l3,-4 h3 l-2,5 q4,3 3,6z" fill="#d82a2c"/><ellipse cx="11.5" cy="30.5" rx="2.6" ry="3" fill="#333"/><ellipse cx="31" cy="29" rx="2.6" ry="3" fill="#333"/><ellipse cx="24" cy="9.5" rx="1.6" ry="1.9" fill="#333"/><polygon points="21.5,12 26.5,12 27.5,20 20.5,20" fill="#d8d0c0"/><polygon points="28,14 37,11 39,16 30,19" fill="#e2d8b4"/></svg></div>
<div class="a" style="left:415.3px;top:488.9px;width:11px;height:11px;border-radius:50%;background:#32383d;color:#fff;text-align:center;font:bold 7.5px/11px 'Liberation Sans',sans-serif;letter-spacing:-0.5px">SI</div>
<div class="a" style="left:373.7px;top:504.4px;width:61.5px;text-align:center;line-height:14px;color:#555;font-size:9.3px">Bike10</div>
<div class="a" style="left:438.7px;top:455.9px;width:45.5px;height:45.5px;border:1.6px solid #8d9ea7;border-radius:3px;background:#e6e6e6;overflow:hidden"><svg width="45" height="45" viewBox="1 1 43 43" style="position:absolute;left:0;top:0"><path d="M8,26 q4,-7 13,-6 l8,-3 6,2 3,6 -8,3 h-16z" fill="#b01f2c"/><ellipse cx="11.5" cy="29.5" rx="3.3" ry="3.8" fill="#222"/><ellipse cx="34" cy="27.5" rx="3.3" ry="3.8" fill="#222"/><ellipse cx="23" cy="9.5" rx="1.6" ry="1.9" fill="#333"/><polygon points="20.5,12 25.5,12 26.5,20 19.5,20" fill="#5f7d74"/></svg></div>
<div class="a" style="left:472.3px;top:488.9px;width:11px;height:11px;border-radius:50%;background:#32383d;color:#fff;text-align:center;font:bold 7.5px/11px 'Liberation Sans',sans-serif;letter-spacing:-0.5px">SI</div>
<div class="a" style="left:430.7px;top:504.4px;width:61.5px;text-align:center;line-height:14px;color:#555;font-size:9.3px">Motorcycle</div>
<div class="a" style="left:495.7px;top:455.9px;width:45.5px;height:45.5px;border:1.6px solid #8d9ea7;border-radius:3px;background:#e6e6e6;overflow:hidden"><svg width="45" height="45" viewBox="1 1 43 43" style="position:absolute;left:0;top:0"><polygon points="5,25.5 13,22 15.5,30.5 7.5,32.5 5,30" fill="#dcdcdf"/>
<polygon points="13,22 37.5,17 38.5,24.5 15.5,30.5" fill="#f2f2f4"/>
<polygon points="11,22.3 17.5,16.5 33,13 38,17 13,22" fill="#f2f2f4"/>
<polygon points="12.5,21.6 17.8,17 21,16.3 16.5,21" fill="#4a4e58"/>
<polygon points="17.8,20.6 21.8,16 32.5,13.8 36.5,17.2" fill="#4a4e58"/>
<rect x="6" y="27.5" width="8" height="1.6" fill="#4a4e58" opacity="0.55"/>
<ellipse cx="11" cy="31.5" rx="2.5" ry="2.9" fill="#2a2a2a"/><ellipse cx="11" cy="31.5" rx="1.1" ry="1.4" fill="#bbb"/>
<ellipse cx="33" cy="25.5" rx="2.3" ry="2.7" fill="#2a2a2a"/><ellipse cx="33" cy="25.5" rx="1" ry="1.3" fill="#bbb"/><polygon points="16.5,24 39,18 39.2,19.5 16.5,25.6" fill="#3a6ad8"/><rect x="19" y="14.5" width="5" height="1.5" fill="#2a5ae0"/><rect x="21" y="14.5" width="1.5" height="1.5" fill="#e33"/></svg></div>
<div class="a" style="left:529.3px;top:488.9px;width:11px;height:11px;border-radius:50%;background:#32383d;color:#fff;text-align:center;font:bold 7.5px/11px 'Liberation Sans',sans-serif;letter-spacing:-0.5px">SI</div>
<div class="a" style="left:487.7px;top:504.4px;width:61.5px;text-align:center;line-height:14px;color:#555;font-size:9.3px">Police01</div>
<div class="a" style="left:552.7px;top:455.9px;width:45.5px;height:45.5px;border:1.6px solid #8d9ea7;border-radius:3px;background:#e6e6e6;overflow:hidden"><svg width="45" height="45" viewBox="1 1 43 43" style="position:absolute;left:0;top:0"><polygon points="5,23 8,19 15,18 15.5,29 6.5,31.5 5,29.5" fill="#e0e0e0" stroke="#a8a8ac" stroke-width="0.35"/>
<polygon points="15,18 38,11.5 40,13 40,23 15.5,29" fill="#f4f4f4" stroke="#a8a8ac" stroke-width="0.35"/>
<polygon points="8,19 12,14 35,9 38,11.5 15,18" fill="#f4f4f4"/>
<polygon points="9,18.5 12.5,14.5 17,13.8 14.5,18" fill="#444a52"/>
<polygon points="15.5,17.2 18,13.5 22,12.7 20,16.3" fill="#444a52"/>
<rect x="5.5" y="25" width="9.5" height="2.5" fill="#333"/>
<ellipse cx="10.5" cy="31" rx="2.4" ry="2.8" fill="#2a2a2a"/><ellipse cx="34" cy="24.5" rx="2.2" ry="2.6" fill="#2a2a2a"/><ellipse cx="19" cy="28.8" rx="2.2" ry="2.6" fill="#2a2a2a"/><polygon points="15.5,23.5 40,17 40,19 15.5,25.5" fill="#d82a2c"/><polygon points="5,24 15.5,22.5 15.5,24.5 5,26" fill="#d82a2c"/><rect x="14" y="12.5" width="6" height="1.5" fill="#d82a2c"/></svg></div>
<div class="a" style="left:586.3px;top:488.9px;width:11px;height:11px;border-radius:50%;background:#32383d;color:#fff;text-align:center;font:bold 7.5px/11px 'Liberation Sans',sans-serif;letter-spacing:-0.5px">SI</div>
<div class="a" style="left:544.7px;top:504.4px;width:61.5px;text-align:center;line-height:14px;color:#555;font-size:9.3px">Ambulance</div>
<div class="a" style="left:609.7px;top:455.9px;width:45.5px;height:45.5px;border:1.6px solid #8d9ea7;border-radius:3px;background:#e6e6e6;overflow:hidden"><svg width="45" height="45" viewBox="1 1 43 43" style="position:absolute;left:0;top:0"><polygon points="5,15 14,14 15,30 6,32" fill="#c81e22"/><polygon points="6,16.5 13.5,15.7 13.8,21 6.5,22" fill="#2a2a2a"/><polygon points="14,14 39,11 40,26 15,30" fill="#d82428"/><polygon points="16,18 38,15 38,16.5 16,19.5" fill="#f0f0f0"/><polygon points="16,23 38,20 38,21.5 16,24.5" fill="#f0f0f0"/><polygon points="8,12 36,9 37,10.5 9,13.5" fill="#bdbdbd"/><ellipse cx="10" cy="32" rx="2.3" ry="2.7" fill="#222"/><ellipse cx="22" cy="29.5" rx="2.2" ry="2.6" fill="#222"/><ellipse cx="35" cy="27" rx="2.2" ry="2.6" fill="#222"/></svg></div>
<div class="a" style="left:643.3px;top:488.9px;width:11px;height:11px;border-radius:50%;background:#32383d;color:#fff;text-align:center;font:bold 7.5px/11px 'Liberation Sans',sans-serif;letter-spacing:-0.5px">SI</div>
<div class="a" style="left:601.7px;top:504.4px;width:61.5px;text-align:center;line-height:14px;color:#555;font-size:9.3px">FireEngine</div>
<div class="a" style="left:985px;top:374.7px;width:4.6px;height:142px;background:#f0f0f0"></div><div class="a" style="left:985px;top:374.7px;width:4.6px;height:124px;border-radius:2.3px;background:#c9ced3"></div>
<svg class="a" style="left:485px;top:524px" width="125" height="14" viewBox="485 524 125 14"><g fill="none" stroke="#b8b8b8" stroke-width="0.9"><path d="M489.5,527 v8 M496,527.5 l-3.5,3.5 3.5,3.5"/><path d="M521.8,527.5 l-3.5,3.5 3.5,3.5"/><path d="M572.8,527.5 l3.5,3.5 -3.5,3.5"/><path d="M598.5,527.5 l3.5,3.5 -3.5,3.5 M604.5,527 v8"/></g></svg>
<div class="a" style="left:535.9px;top:519.8px;width:22.5px;height:22.5px;border-radius:50%;background:#d9d9d9;color:#555;text-align:center;line-height:22.5px;font-size:9.5px">1</div>
<div class="a" style="left:629px;top:524px;line-height:14px;color:#555;font-size:9.5px">跳转至</div>
<div class="a" style="left:665.3px;top:522px;width:35px;height:18.3px;border:1px solid #dcdfe6;border-radius:2px;line-height:16.3px;padding-left:7px;color:#555;font-size:9.5px">1</div>
<div class="a" style="left:705px;top:524px;line-height:14px;color:#555;font-size:9.5px">页</div>

<!-- ===== RIGHT PANEL ===== -->
<div class="a" style="left:996px;top:24px;width:284px;height:527px;background:#fff"></div>
<div class="a" style="left:996px;top:24px;width:0.8px;height:527px;background:#e6e6e6"></div>
<div class="a" style="left:1276.5px;top:24px;width:3.5px;height:527px;background:#f4f4f4"></div>
<div class="a" style="left:1276.5px;top:25px;width:3.5px;height:475px;background:#c9c9c9"></div>
<div class="hl" style="left:996px;top:24px;width:284px"></div>

<div class="lab" style="top:40px">名称</div>
<div class="inp" style="left:1105px;top:36.3px;width:152px;height:19.5px">手动控制-OBU</div>
<div class="lab" style="top:67px">类型</div>
<div class="inp" style="left:1105px;top:63.5px;width:152px;height:19.3px">手动控制-OBU</div>
<div class="caret" style="left:1243.5px;top:71.5px"></div>
<div class="lab" style="top:94px">主车ID</div>
<div class="inp" style="left:1105px;top:90.7px;width:152px;height:19.3px;border-color:#c8c8c8;color:#bbb;box-shadow:inset 0 1px 1px rgba(0,0,0,0.08)">Ego</div>
<div class="lab" style="top:121px">主车视色</div>
<div class="inp" style="left:1105px;top:117.4px;width:152px;height:19.3px"></div>
<div class="a" style="left:1111px;top:121.5px;width:11.5px;height:11.5px;background:#5cb83a"></div>
<div class="a" style="left:1130px;top:121px;line-height:12px;color:#555">绿色</div>
<div class="caret" style="left:1243.5px;top:125.5px"></div>
<div class="lab" style="top:148px">使用主车预设控制器</div>
<div class="tog" style="left:1109px;top:148.3px"></div>
<div class="lab" style="top:175px">控制器</div>
<div class="inp" style="left:1105px;top:171.5px;width:152px;height:19.3px;color:#c4c4c4;border-color:#e6e6e6">手动控制</div>
<div class="caret" style="left:1243.5px;top:179.5px;border-top-color:#c8c8c8"></div>
<div class="lab" style="top:202px">启用OBU</div>
<div class="tog" style="left:1109px;top:202.3px"></div>
<div class="a" style="left:999.6px;top:192.7px;width:164.2px;height:31px;border:3px solid #ea121c"></div>
<div class="lab" style="top:229px">OBU ID</div>
<div class="inp" style="left:1105px;top:225.5px;width:152px;height:19.3px;border-color:#c8c8c8;color:#bbb">0</div>

<div class="hl" style="left:996px;top:256.8px;width:280px;background:#e8e8e8"></div>
<div class="a" style="left:996px;top:257.5px;width:139.6px;height:21.3px;background:#4a8fe0;color:#fff;text-align:center;line-height:21.3px;font-weight:bold">初始状态</div>
<div class="a" style="left:1135.6px;top:257.5px;width:141px;height:21.3px;color:#555;text-align:center;line-height:21.3px">行为规划</div>
<div class="hl" style="left:996px;top:278.8px;width:280px;background:#e8e8e8"></div>
<div class="a" style="left:997px;top:279px;width:279px;height:272px;background:#fcfcfc"></div>

<!-- 位移 card -->
<div class="a" style="left:1003.2px;top:286.7px;width:265.5px;height:110.6px;border:1px solid #4a8fe0;border-radius:2px;background:#f8f8f8;box-shadow:0 1px 2px rgba(0,0,0,0.12)"></div>
<div class="a" style="left:1003.2px;top:286.7px;width:265.5px;height:21.5px;background:#4a8fe0;color:#fff;text-align:center;line-height:21.5px;font-weight:bold;border-radius:2px 2px 0 0">位移</div>
<div class="lab" style="top:320px;left:1011px">位置类型</div>
<div class="inp" style="left:1104.4px;top:316.1px;width:156px;height:19.3px;background:#f8f8f8">世界位置</div>
<div class="caret" style="left:1247px;top:324px"></div>
<div class="lab" style="top:347px;left:1011px">x</div>
<div class="inp" style="left:1018.9px;top:343.1px;width:69.8px;height:19.3px;background:#f8f8f8">-63.875</div>
<div class="lab" style="top:347px;left:1096px">y</div>
<div class="inp" style="left:1104.4px;top:343.1px;width:69.8px;height:19.3px;background:#f8f8f8">-3.000007</div>
<div class="lab" style="top:347px;left:1181.5px">z</div>
<div class="inp" style="left:1189.4px;top:343.1px;width:71.1px;height:19.3px;background:#f8f8f8">0</div>
<div class="caret" style="left:1247px;top:351px"></div>
<div class="lab" style="top:374px;left:1011px">朝向</div>
<div class="inp" style="left:1104.4px;top:370.3px;width:156px;height:19.3px;background:#f8f8f8">0.000006<span style="position:absolute;right:9px;color:#666">deg</span></div>

<!-- 速度 card -->
<div class="a" style="left:1002.5px;top:404.5px;width:266.3px;height:82.1px;border-radius:3px;background:#f8f8f8;box-shadow:0 1px 2.5px rgba(0,0,0,0.14)"></div>
<div class="a" style="left:1002.5px;top:404.5px;width:266.3px;height:21px;background:#e4ecef;color:#555;text-align:center;line-height:21px;border-radius:3px 3px 0 0">速度</div>
<div class="lab" style="top:437px;left:1010.5px">目标速度类型</div>
<div class="inp" style="left:1105.3px;top:433.3px;width:156.3px;height:19px;background:#f8f8f8">绝对目标速度</div>
<div class="caret" style="left:1248px;top:441px"></div>
<div class="lab" style="top:464px;left:1010.5px">绝对目标速度</div>
<div class="inp" style="left:1105.3px;top:460.7px;width:156.3px;height:18.7px;background:#f8f8f8">10<span style="position:absolute;right:9px;color:#666">m/s</span></div>

<!-- 控制器启动 card -->
<div class="a" style="left:1002.5px;top:493.5px;width:266.3px;height:70px;border-radius:3px;background:#f8f8f8;box-shadow:0 1px 2.5px rgba(0,0,0,0.14)"></div>
<div class="a" style="left:1002.5px;top:493.5px;width:266.3px;height:21.8px;background:#e4ecef;color:#555;text-align:center;line-height:21.8px;border-radius:3px 3px 0 0">控制器启动</div>
<svg class="a" style="left:1246.5px;top:497px" width="13" height="15" viewBox="0 0 13 15"><path d="M0.5,2.6 h12 M4.5,2.5 v-1.5 h4 v1.5" fill="none" stroke="#555" stroke-width="1"/><path d="M1.8,4 h9.4 l-0.6,10.3 h-8.2z" fill="none" stroke="#555" stroke-width="1"/><path d="M4.5,5.5 v7 M6.5,5.5 v7 M8.5,5.5 v7" stroke="#555" stroke-width="0.8"/></svg>
<div class="lab" style="top:526.5px;left:1010.5px">横向</div>
<div class="tog" style="left:1110px;top:526.4px"></div>

<!-- ===== BOTTOM ===== -->
<div class="a" style="left:0;top:551px;width:1280px;height:30px;background:#fff"></div>
<div class="hl" style="left:0;top:551px;width:1280px;background:#e2e2e2"></div>
<div class="tri" style="left:7px;top:561.5px;border-left-color:#7d8c96"></div>
<div class="a" style="left:16.2px;top:557.5px;line-height:14px;color:#444">文本编辑器</div>
<div class="a" style="left:0;top:578px;width:905px;height:1px;background:#c8c8c8"></div>
<div class="a" style="left:0;top:579px;width:905px;height:2px;background:#f0f0f0"></div>
<div class="a" style="left:25px;top:579.5px;width:12.5px;height:2px;background:#7d8c96"></div>
<div class="a" style="left:40px;top:579.5px;width:24px;height:1.5px;background:#c0c4c8"></div>
</body></html>
